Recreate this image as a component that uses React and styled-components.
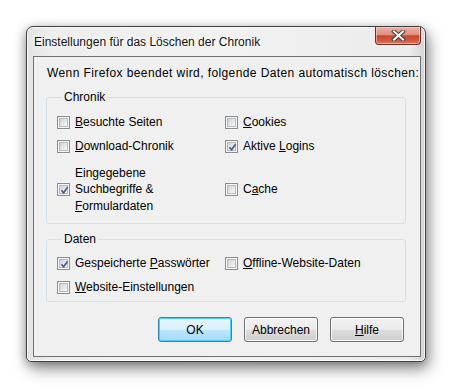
import React from 'react';
import styled, { createGlobalStyle } from 'styled-components';

const GlobalStyle = createGlobalStyle`
  body {
    margin: 0;
    background: #ffffff;
    font-family: "Liberation Sans", Arial, sans-serif;
  }
`;

const Desktop = styled.div`
  width: 453px;
  height: 389px;
  box-sizing: border-box;
  padding: 26px 0 0 26px;
  overflow: hidden;
`;

const Window = styled.div`
  width: 400px;
  height: 336px;
  box-sizing: border-box;
  display: flex;
  flex-direction: column;
  padding: 0 4px 4px 6px;
  border: 1px solid #404040;
  border-radius: 7px 7px 5px 5px;
  background: linear-gradient(90deg, #e2e2e2 0%, #eeeeee 6%, #f2f2f2 50%, #ececec 96%, #d4d4d4 100%);
  box-shadow: inset 0 0 0 1px rgba(255, 255, 255, 0.75), 3px 7px 16px rgba(0, 0, 0, 0.42),
    -1px 2px 10px rgba(0, 0, 0, 0.25);
`;

const TitleBar = styled.div`
  height: 29px;
  display: flex;
  align-items: flex-start;
  justify-content: space-between;
  padding-left: 1px;
`;

const Title = styled.div`
  margin-top: 8px;
  font-size: 12px;
  color: #111;
  text-shadow: 0 0 6px #fff, 0 0 3px #fff, 0 0 10px #fff;
`;

const CloseButton = styled.div`
  width: 46px;
  height: 18px;
  box-sizing: border-box;
  display: flex;
  align-items: center;
  justify-content: center;
  border: 1px solid #6b2d24;
  border-top: none;
  border-radius: 0 0 4px 4px;
  background: linear-gradient(180deg, #eab0a2 0%, #e0907f 45%, #c8462f 52%, #cf5a40 80%, #e07a5c 100%);
  box-shadow: inset 0 0 0 1px rgba(255, 220, 210, 0.55);
`;

const Client = styled.div`
  flex: 1;
  display: flex;
  flex-direction: column;
  border: 1px solid #6f7174;
  background: #f0f0f0;
  padding: 9px 16px 0 12px;
  font-size: 12px;
  color: #000;
`;

const Intro = styled.div`
  padding-left: 1px;
  line-height: 15px;
  letter-spacing: 0.4px;
  white-space: nowrap;
  margin-bottom: 9px;
`;

const Group = styled.fieldset`
  margin: 0 -2px ${(p) => p.$gap}px 0;
  padding: ${(p) => p.$top}px 0 ${(p) => p.$bottom}px 10px;
  border: 1px solid #d5dfe5;
  border-radius: 3px;
  min-width: 0;
`;

const Legend = styled.legend`
  margin-left: 5px;
  padding: 0 2px;
  line-height: 15px;
`;

const Grid = styled.div`
  display: grid;
  grid-template-columns: 168px 1fr;
  row-gap: 8px;
`;

const Option = styled.label`
  display: flex;
  align-items: center;
  gap: 5px;
  line-height: ${(p) => (p.$tall ? '16.5px' : '16px')};
  margin-top: ${(p) => (p.$tall ? '2.5px' : '0')};
`;

const Box = styled.span`
  position: relative;
  flex: none;
  width: 13px;
  height: 13px;
  box-sizing: border-box;
  border: 1px solid #8e8f8f;
  background: #f6f6f6;
  display: flex;
  align-items: center;
  justify-content: center;

  &::before {
    content: '';
    width: 9px;
    height: 9px;
    box-sizing: border-box;
    border: 1px solid #b8bcc1;
    background: linear-gradient(135deg, #cdd1d6 0%, #e4e6e8 50%, #f8f8f8 100%);
  }

  svg {
    position: absolute;
    left: 1px;
    top: 1px;
  }
`;

const Buttons = styled.div`
  margin-top: 15px;
  display: flex;
  justify-content: flex-end;
  gap: 12px;
`;

const Button = styled.div`
  width: 74px;
  height: 25px;
  box-sizing: border-box;
  display: flex;
  align-items: center;
  justify-content: center;
  border: 1px solid ${(p) => (p.$default ? '#3c7fb1' : '#707070')};
  border-radius: 3px;
  background: ${(p) =>
    p.$default
      ? 'linear-gradient(180deg, #eaf6fd 0%, #d9f0fc 50%, #bee6fd 51%, #a7d9f5 100%)'
      : 'linear-gradient(180deg, #f2f2f2 0%, #ebebeb 50%, #dddddd 51%, #cfcfcf 100%)'};
  box-shadow: inset 0 0 0 1px ${(p) => (p.$default ? '#48d0f8' : 'rgba(255,255,255,0.8)')};
`;

function Check({ checked }) {
  return (
    <Box>
      {checked && (
        <svg width="11" height="11" viewBox="0 0 11 11">
          <path d="M2.5 5.3 L4.6 7.8 L8.6 2.2" fill="none" stroke="#4b5e94" strokeWidth="1.7" />
        </svg>
      )}
    </Box>
  );
}

function Item({ checked, tall, children }) {
  return (
    <Option $tall={tall}>
      <Check checked={checked} />
      <span>{children}</span>
    </Option>
  );
}

export default function App() {
  return (
    <>
      <GlobalStyle />
      <Desktop>
        <Window>
          <TitleBar>
            <Title>Einstellungen für das Löschen der Chronik</Title>
            <CloseButton>
              <svg width="15" height="11" viewBox="0 0 15 11">
                <path d="M3 1.5 L12 9.5 M12 1.5 L3 9.5" stroke="#3f3f46" strokeWidth="4" strokeLinecap="square" />
                <path d="M3 1.5 L12 9.5 M12 1.5 L3 9.5" stroke="#ffffff" strokeWidth="2" strokeLinecap="square" />
              </svg>
            </CloseButton>
          </TitleBar>
          <Client>
            <Intro>Wenn Firefox beendet wird, folgende Daten automatisch löschen:</Intro>
            <Group $gap={8} $top={9} $bottom={9}>
              <Legend>Chronik</Legend>
              <Grid>
                <Item>
                  <u>B</u>esuchte Seiten
                </Item>
                <Item>
                  <u>C</u>ookies
                </Item>
                <Item>
                  <u>D</u>ownload-Chronik
                </Item>
                <Item checked>
                  Aktive <u>L</u>ogins
                </Item>
                <Item checked tall>
                  Eingegebene
                  <br />
                  Suchbegriffe &amp;
                  <br />
                  <u>F</u>ormulardaten
                </Item>
                <Item tall>
                  C<u>a</u>che
                </Item>
              </Grid>
            </Group>
            <Group $gap={0} $top={8} $bottom={6}>
              <Legend>Daten</Legend>
              <Grid>
                <Item checked>
                  Gespeicherte <u>P</u>asswörter
                </Item>
                <Item>
                  <u>O</u>ffline-Website-Daten
                </Item>
                <Item>
                  <u>W</u>ebsite-Einstellungen
                </Item>
              </Grid>
            </Group>
            <Buttons>
              <Button $default>OK</Button>
              <Button>Abbrechen</Button>
              <Button>
                <span>
                  <u>H</u>ilfe
                </span>
              </Button>
            </Buttons>
          </Client>
        </Window>
      </Desktop>
    </>
  );
}
